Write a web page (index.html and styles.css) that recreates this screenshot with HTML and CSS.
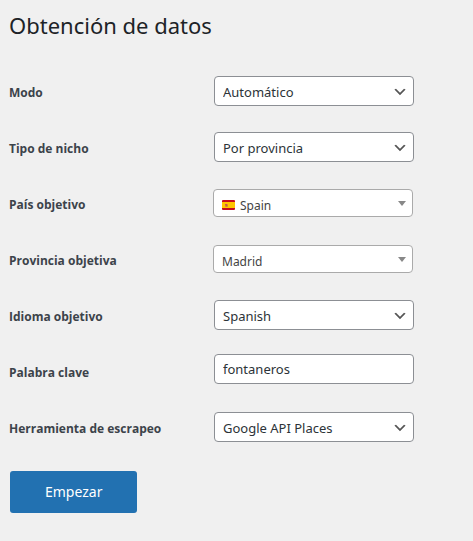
FILE: index.html
```html
<!DOCTYPE html>
<html lang="es">
<head>
    <meta charset="UTF-8">
    <meta name="viewport" content="width=device-width, initial-scale=1.0">
    <title>Obtención de datos</title>
    <link rel="stylesheet" href="styles.css">
</head>
<body>

<main class="wrap">
    <h1 class="title">Obtención de datos</h1>

    <form class="form">
        <div class="row">
            <label for="mode">Modo</label>
            <select id="mode" class="field">
                <option>Automático</option>
            </select>
        </div>
        <div class="row">
            <label for="niche">Tipo de nicho</label>
            <select id="niche" class="field">
                <option>Por provincia</option>
            </select>
        </div>
        <div class="row">
            <label for="country">País objetivo</label>
            <div class="picker">
                <svg class="flag" viewBox="0 0 13 10" aria-hidden="true">
                    <rect width="13" height="10" rx="1" fill="#c60b1e"/>
                    <rect y="2" width="13" height="6" fill="#ffc400"/>
                    <rect x="3" y="4" width="3" height="3" rx="1" fill="#d9822b"/>
                    <path d="M3 4h2v1H3zM4 5h1v1H4z" fill="#c8505a"/>
                </svg>
                <select id="country">
                    <option>Spain</option>
                </select>
            </div>
        </div>
        <div class="row">
            <label for="province">Provincia objetiva</label>
            <div class="picker">
                <select id="province">
                    <option>Madrid</option>
                </select>
            </div>
        </div>
        <div class="row">
            <label for="language">Idioma objetivo</label>
            <select id="language" class="field">
                <option>Spanish</option>
            </select>
        </div>
        <div class="row row-text">
            <label for="keyword">Palabra clave</label>
            <input id="keyword" class="field" type="text" value="fontaneros">
        </div>
        <div class="row">
            <label for="tool">Herramienta de escrapeo</label>
            <select id="tool" class="field">
                <option>Google API Places</option>
            </select>
        </div>

        <button class="submit" type="button">Empezar</button>
    </form>
</main>

</body>
</html>
```

FILE: styles.css
```css
* {
    box-sizing: border-box;
}

body {
    margin: 0;
    background-color: #f0f0f0;
    color: #3c434a;
    font-family: "Segoe UI", "Noto Sans", sans-serif;
    font-size: 13px;
}

.wrap {
    padding: 10px 9px;
}

.title {
    margin: 0 0 23px;
    color: #1d2327;
    font-size: 22px;
    font-weight: 400;
    line-height: 30px;
}

.row {
    display: grid;
    grid-template-columns: 205px minmax(0, 200px);
    align-items: center;
    height: 56px;
}

.row label {
    font-family: "Segoe UI", "Open Sans", sans-serif;
    font-size: 12px;
    font-weight: 700;
    line-height: 18px;
    padding-top: 4px;
}

.field {
    width: 100%;
    height: 30px;
    margin: 0;
    padding: 0 8px;
    border: 1px solid #8c8f94;
    border-radius: 4px;
    background-color: #fff;
    color: #2c3338;
    font: inherit;
    font-size: 13px;
}

select.field {
    appearance: none;
    padding-top: 2px;
    padding-right: 24px;
    background-image: url("data:image/svg+xml,%3Csvg xmlns='http://www.w3.org/2000/svg' viewBox='0 0 20 20'%3E%3Cpath d='M5 6l5 5 5-5 2 1-7 7-7-7 2-1z' fill='%23555'/%3E%3C/svg%3E");
    background-repeat: no-repeat;
    background-position: right 5px top 55%;
    background-size: 16px 16px;
}

/* The text box sits a little higher than the drop-downs */
.row-text .field {
    margin-bottom: 4px;
}

/* Searchable drop-downs */
.picker {
    display: flex;
    align-items: center;
    gap: 5px;
    height: 28px;
    margin: 0 1px 0 -1px;
    padding: 0 6px 0 8px;
    border: 1px solid #aaa;
    border-radius: 4px;
    background-color: #fff;
}

.picker select {
    appearance: none;
    flex: 1;
    min-width: 0;
    height: 26px;
    margin: 0;
    padding: 5px 14px 0 0;
    border: 0;
    background: transparent url("data:image/svg+xml,%3Csvg xmlns='http://www.w3.org/2000/svg' viewBox='0 0 8 5'%3E%3Cpath d='M0 0h8L4 5z' fill='%23888'/%3E%3C/svg%3E") no-repeat right 0 top 11px / 8px 5px;
    color: #444;
    font: inherit;
    font-size: 12px;
}

.flag {
    width: 13px;
    height: 10px;
    margin-top: 3px;
}

.submit {
    margin: 16px 1px;
    padding: 0 35px;
    border: 0;
    border-radius: 3px;
    background-color: #2271b1;
    color: #fff;
    font: inherit;
    font-size: 14px;
    line-height: 42px;
    cursor: pointer;
}
```
